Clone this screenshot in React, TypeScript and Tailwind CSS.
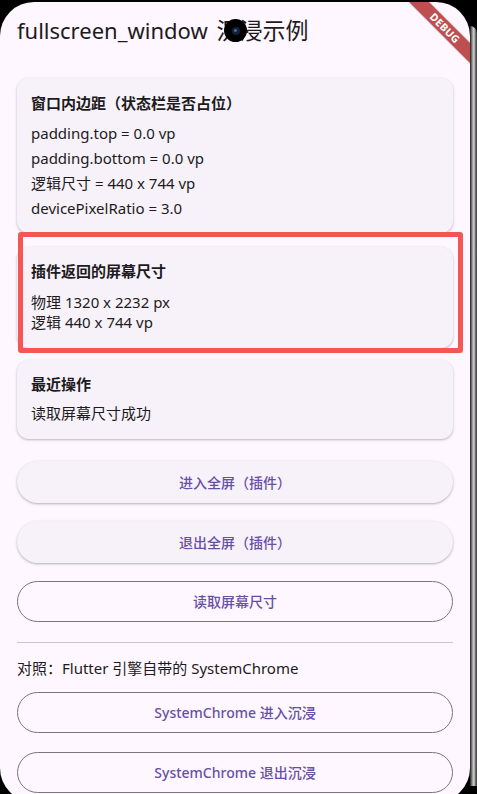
const cardCls =
  "rounded-[12px] bg-[#f7f2fa] px-[14px] shadow-[0_1px_2px_rgba(0,0,0,0.2),0_1px_3px_1px_rgba(0,0,0,0.06)]";

function ElevatedButton({ label, className }: { label: string; className?: string }) {
  return (
    <button
      className={`flex h-[42px] w-full items-center justify-center rounded-full bg-[#f7f2fa] text-[14px] font-medium text-[#6750a4] shadow-[0_1px_2px_rgba(0,0,0,0.22),0_1px_3px_1px_rgba(0,0,0,0.06)] ${className ?? ""}`}
    >
      {label}
    </button>
  );
}

function OutlinedButton({ label, className }: { label: string; className?: string }) {
  return (
    <button
      className={`flex h-[41px] w-full items-center justify-center rounded-full border border-[#79747e] text-[14px] font-medium text-[#6750a4] ${className ?? ""}`}
    >
      {label}
    </button>
  );
}

export default function App() {
  return (
    <div className="relative flex h-[794px] w-[477px] overflow-hidden bg-black font-['Noto_Sans','Noto_Sans_CJK_SC',sans-serif] text-[#1d1b20]">
      {/* Phone screen */}
      <div className="relative mt-[2px] h-[800px] w-[470px] shrink-0 overflow-hidden rounded-[34px] bg-[#fef7ff]">
        <header className="flex h-[56px] items-center px-[17px]">
          <h1 className="text-[22px] leading-[28px] font-normal">
            fullscreen_window <span className="ml-[3px] text-[23px]">沉浸示例</span>
          </h1>
        </header>

        {/* Camera punch hole */}
        <div className="absolute left-[224px] top-[17px] flex h-[23px] w-[23px] items-center justify-center rounded-full bg-black">
          <div className="h-[8px] w-[8px] rounded-full bg-[#13213a]">
            <div className="ml-[2px] mt-[2px] h-[3px] w-[3px] rounded-full bg-[#3d6aa8]" />
          </div>
        </div>

        {/* Debug banner */}
        <div className="absolute left-[388px] top-[19px] flex h-[14px] w-[114px] rotate-45 items-center justify-center bg-[#bd4f50] shadow-[0_0_2px_rgba(0,0,0,0.3)]">
          <span className="text-[10.5px] font-bold leading-[14px] tracking-[0.3px] text-white">DEBUG</span>
        </div>

        <main className="px-[17px] pt-[20px]">
          <section className={`${cardCls} pt-[15px] pb-[12px]`}>
            <h2 className="text-[15px] font-bold leading-[20px]">窗口内边距（状态栏是否占位）</h2>
            <div className="mt-[8px] text-[15px] leading-[25px]">
              <p>padding.top = 0.0 vp</p>
              <p>padding.bottom = 0.0 vp</p>
              <p>逻辑尺寸 = 440 x 744 vp</p>
              <p>devicePixelRatio = 3.0</p>
            </div>
          </section>

          <section className={`${cardCls} mt-[14px] pt-[14px] pb-[16px]`}>
            <h2 className="text-[15px] font-bold leading-[20px]">插件返回的屏幕尺寸</h2>
            <div className="mt-[11px] text-[15px] leading-[20px]">
              <p>物理 1320 x 2232 px</p>
              <p>逻辑 440 x 744 vp</p>
            </div>
          </section>

          <section className={`${cardCls} mt-[12px] pt-[14px] pb-[16px]`}>
            <h2 className="text-[15px] font-bold leading-[20px]">最近操作</h2>
            <p className="mt-[9px] text-[15px] leading-[20px]">读取屏幕尺寸成功</p>
          </section>

          <ElevatedButton label="进入全屏（插件）" className="mt-[22px]" />
          <ElevatedButton label="退出全屏（插件）" className="mt-[18px]" />
          <OutlinedButton label="读取屏幕尺寸" className="mt-[18px]" />

          <div className="mt-[20px] h-px bg-[#cac4d0]" />
          <p className="mt-[15px] text-[15px] leading-[20px]">对照：Flutter 引擎自带的 SystemChrome</p>

          <OutlinedButton label="SystemChrome 进入沉浸" className="mt-[14px]" />
          <OutlinedButton label="SystemChrome 退出沉浸" className="mt-[19px]" />
        </main>
      </div>

      {/* Right bezel */}
      <div className="mt-[26px] h-[760px] w-[7px] rounded-tr-[8px] bg-[linear-gradient(to_right,#1c1c1c,#8c8c8c_30%,#d4d4d4_55%,#6a6a6a_80%,#3a3a3a)]" />

      {/* Screenshot annotation */}
      <div className="absolute left-[18px] top-[232px] h-[121px] w-[445px] rounded-[3px] border-[5px] border-[#f45656]" />
    </div>
  );
}
